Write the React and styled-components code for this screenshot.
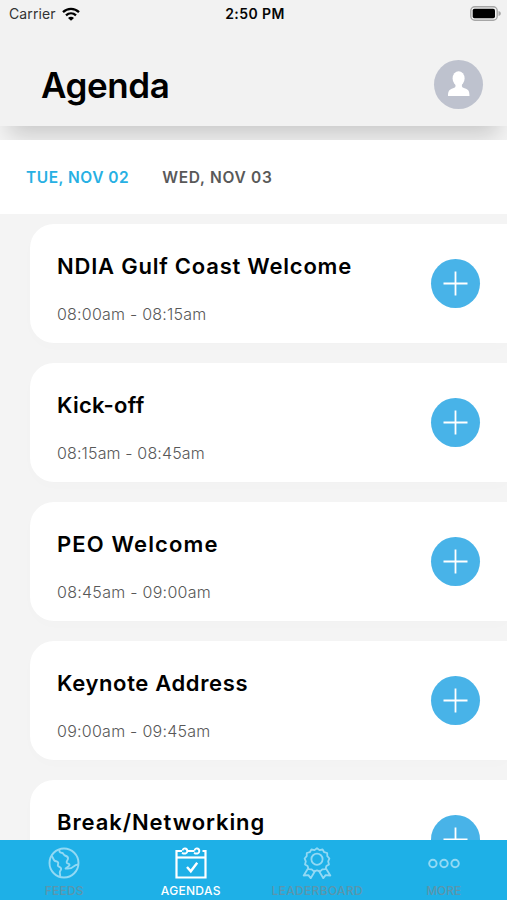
import styled, { createGlobalStyle } from "styled-components";

const GlobalStyle = createGlobalStyle`
    * {
        box-sizing: border-box;
    }
    body {
        margin: 0;
        font-family: Inter, "Liberation Sans", sans-serif;
        color: #050505;
        background-color: #f4f4f4;
    }
    h1, h2, p {
        margin: 0;
    }
    button {
        border: none;
        padding: 0;
        font-family: inherit;
        background: none;
    }
    svg {
        display: block;
    }
`

const Screen = styled.div`
    display: flex;
    flex-direction: column;
    height: 100vh;
    overflow: hidden;
`

const Header = styled.header`
    flex: none;
    height: 126px;
    background-color: #f2f2f2;
    box-shadow: 0 18px 22px -9px rgba(0, 0, 0, 0.18);
`

const StatusBar = styled.div`
    display: grid;
    grid-template-columns: 1fr auto 1fr;
    align-items: center;
    height: 27px;
    padding: 0 6px 0 9px;
    font-size: 14px;
`

const Carrier = styled.div`
    display: flex;
    align-items: center;
    gap: 6px;
    letter-spacing: 0.1px;
    color: #333;
`

const Clock = styled.span`
    font-weight: 600;
    letter-spacing: 0.4px;
`

const Battery = styled.div`
    justify-self: end;
`

const TitleRow = styled.div`
    display: flex;
    align-items: center;
    justify-content: space-between;
    height: 99px;
    padding: 16px 24px 0 41px;
`

const Title = styled.h1`
    font-size: 35px;
    line-height: 42px;
    font-weight: 600;
    letter-spacing: -0.4px;
    color: #000;
`

const Avatar = styled.div`
    width: 49px;
    height: 49px;
    margin-bottom: 1px;
    border-radius: 50%;
    background-color: #bec2ce;
`

const Days = styled.nav`
    position: relative;
    flex: none;
    display: flex;
    align-items: center;
    gap: 33px;
    height: 74px;
    margin-top: 14px;
    padding-left: 26px;
    background-color: white;
`

const Day = styled.button`
    font-size: 15.5px;
    font-weight: 600;
    letter-spacing: ${props => props.$tracking};
    color: ${props => props.$active ? "#27b0e3" : "#595959"};
`

const List = styled.main`
    flex: 1;
    min-height: 0;
    overflow: hidden;
    display: flex;
    flex-direction: column;
    gap: 20px;
    padding: 10px 0 0 30px;
`

const Card = styled.article`
    flex: none;
    display: flex;
    align-items: center;
    justify-content: space-between;
    height: 119px;
    padding: 0 27px;
    border-radius: 24px 0 0 24px;
    background-color: white;
    box-shadow: 0 4px 14px rgba(0, 0, 0, 0.01);
`

const Session = styled.div`
    align-self: flex-start;
    padding-top: 28px;
`

const SessionTitle = styled.h2`
    font-size: 22px;
    line-height: 28px;
    font-weight: 600;
    letter-spacing: ${props => props.$tracking};
    white-space: nowrap;
    color: #000;
`

const Time = styled.p`
    margin-top: 24px;
    font-size: 16px;
    line-height: 20px;
    font-weight: 300;
    letter-spacing: ${props => props.$tracking};
    white-space: nowrap;
    color: #585858;
`

const AddButton = styled.button`
    width: 49px;
    height: 49px;
    border-radius: 50%;
    background-color: #48b3e8;
`

const TabBar = styled.nav`
    flex: none;
    display: grid;
    grid-template-columns: repeat(4, 1fr);
    height: 60px;
    padding-left: 1px;
    background-color: #1eb0e7;
`

const Tab = styled.button`
    display: flex;
    flex-direction: column;
    align-items: center;
    padding-top: 7px;
    color: ${props => props.$active ? "white" : "#92d9f4"};
    span {
        margin-top: 4px;
        font-size: 12px;
        line-height: 15px;
        font-weight: 500;
        letter-spacing: ${props => props.$tracking};
        color: ${props => props.$active ? "white" : "#5b96ad"};
    }
`

const days = [
    { label: "TUE, NOV 02", tracking: "0.5px", active: true },
    { label: "WED, NOV 03", tracking: "0.7px" },
]

const sessions = [
    { title: "NDIA Gulf Coast Welcome", tracking: "0.78px", time: "08:00am - 08:15am", timeTracking: "0.22px" },
    { title: "Kick-off", tracking: "0.25px", time: "08:15am - 08:45am", timeTracking: "0.14px" },
    { title: "PEO Welcome", tracking: "1.15px", time: "08:45am - 09:00am", timeTracking: "0.28px" },
    { title: "Keynote Address", tracking: "0.63px", time: "09:00am - 09:45am", timeTracking: "0.26px" },
    { title: "Break/Networking", tracking: "0.92px" },
]

const WifiIcon = () => (
    <svg width="18" height="14" viewBox="0 0 18 14" fill="none" stroke="#000" strokeWidth="2.3">
        <path d="M1 5.1C5.5.8 12.5.8 17 5.1" />
        <path d="M4 8.3c2.9-2.7 7.1-2.7 10 0" />
        <path d="M9 13.8 6 10.9c1.7-1.5 4.3-1.5 6 0z" fill="#000" stroke="none" />
    </svg>
)

const BatteryIcon = () => (
    <svg width="31" height="15" viewBox="0 0 31 15">
        <rect x="0.8" y="0.8" width="26.4" height="13.4" rx="4" fill="#f2f2f2" stroke="#a6a6a6" strokeWidth="1.4" />
        <rect x="2.7" y="2.8" width="22.3" height="9.4" rx="1.8" fill="#000" />
        <path d="M28.5 5v5c1.8-.6 2.3-1.5 2.3-2.5s-.5-1.900-2.300-2.500z" fill="#a6a6a6" />
    </svg>
)

const PersonIcon = () => (
    <svg width="49" height="49" viewBox="0 0 49 49" fill="white">
        <ellipse cx="24.6" cy="18.6" rx="6" ry="7.4" />
        <path d="M21.5 23h6.400v3.200c.3 1.400 2.100 1.800 4.100 2.600 2.500 1 3.500 2.800 3.500 7.200H14c0-4.400 1.200-6.200 3.700-7.200 2-.8 3.600-1.200 3.800-2.600z" />
    </svg>
)

const PlusIcon = () => (
    <svg width="49" height="49" viewBox="0 0 49 49" stroke="white" strokeWidth="1.8">
        <path d="M24.5 12.500v24M12.500 24.500h24" />
    </svg>
)

const GlobeIcon = () => (
    <svg width="32" height="32" viewBox="0 0 32 32" fill="none" stroke="currentColor" strokeWidth="1.9" strokeLinejoin="round">
        <circle cx="16" cy="16" r="14.500" />
        <path d="M11.5 2.300c-.5 2 .2 3.200 2 3.500 2.500.3 1.500 2 3.300 2.700 1.800.6 3.700 1.200 3.200 3.400-.4 1.600-2 2.500-1.200 3.900.8 1.300 2.600.4 2.800 2.200-.6 1.400-2.600 2.200-4 3.500 3.500.5 6.500-.2 8.500-2.300 1.400-1.400 2.600-1.500 4.200-1.700" />
        <path d="M3.300 9c1.800.4 1.500 3.400 3.200 4.600 1.300.9 2.900.3 3.600 1.800.6 1.400-.8 2.300-.1 3.500.7 1 2.700 1 3.100 2.500.4 1.700-1.300 2.400-1.300 4 0 1.300.7 2 .2 4.200" />
    </svg>
)

const CalendarIcon = () => (
    <svg width="32" height="32" viewBox="0 0 32 32" fill="none" stroke="currentColor" strokeWidth="2.2">
        <path d="M7 4H1.500v26.500h29V4h-3M12.500 4h7" />
        <path d="M1.500 10.500h29" />
        <path d="M7 5.800c3 1.700 5.300.3 5.300-1.900 0-3-4.600-3.400-4.600-.4M19 5.800c3 1.700 5.300.3 5.300-1.900 0-3-4.600-3.400-4.600-.4" strokeWidth="1.9" />
        <path d="m12 20 3.800 4.300 6.400-8.500" strokeWidth="2.4" />
    </svg>
)

const BadgeIcon = () => (
    <svg width="32" height="32" viewBox="0 0 32 32" fill="none" stroke="currentColor" strokeWidth="1.8" strokeLinejoin="round">
        <path d="m16 1.200 2.500 1.900 3.100-.6 1.600 2.700 3 .8.100 3.200 2.100 2.300-1.200 2.900.8 3-2.600 1.700-.9 3-3.200.2-2.200 2.100-3.100-1-3.100 1-2.200-2.100-3.200-.2-.9-3L4 17.400l.8-3-1.200-2.900 2.100-2.300.1-3.200 3-.8 1.600-2.700 3.100.6z" />
        <circle cx="16" cy="12.2" r="5.600" />
        <path d="m7 21.500-4.300 7 4.700-.4 2.300 3.100 4.800-8M25 21.500l4.300 7-4.700-.4-2.300 3.100-4.800-8" />
    </svg>
)

const MoreIcon = () => (
    <svg width="32" height="32" viewBox="0 0 32 32" fill="none" stroke="currentColor" strokeWidth="2">
        <circle cx="4.900" cy="16.500" r="3.700" />
        <circle cx="16" cy="16.500" r="3.700" />
        <circle cx="27.100" cy="16.500" r="3.700" />
    </svg>
)

const tabs = [
    { label: "FEEDS", icon: GlobeIcon, tracking: "0.2px" },
    { label: "AGENDAS", icon: CalendarIcon, tracking: "0.3px", active: true },
    { label: "LEADERBOARD", icon: BadgeIcon, tracking: "0.35px" },
    { label: "MORE", icon: MoreIcon, tracking: "0px" },
]

const App = () => {
    return (
        <Screen>
            <GlobalStyle />
            <Header>
                <StatusBar>
                    <Carrier>
                        <span>Carrier</span>
                        <WifiIcon />
                    </Carrier>
                    <Clock>2:50 PM</Clock>
                    <Battery>
                        <BatteryIcon />
                    </Battery>
                </StatusBar>
                <TitleRow>
                    <Title>Agenda</Title>
                    <Avatar>
                        <PersonIcon />
                    </Avatar>
                </TitleRow>
            </Header>
            <Days>
                {days.map(day => (
                    <Day key={day.label} $active={day.active} $tracking={day.tracking}>{day.label}</Day>
                ))}
            </Days>
            <List>
                {sessions.map(session => (
                    <Card key={session.title}>
                        <Session>
                            <SessionTitle $tracking={session.tracking}>{session.title}</SessionTitle>
                            {session.time && <Time $tracking={session.timeTracking}>{session.time}</Time>}
                        </Session>
                        <AddButton aria-label="Add">
                            <PlusIcon />
                        </AddButton>
                    </Card>
                ))}
            </List>
            <TabBar>
                {tabs.map(({ label, icon: Icon, active, tracking }) => (
                    <Tab key={label} $active={active} $tracking={tracking}>
                        <Icon />
                        <span>{label}</span>
                    </Tab>
                ))}
            </TabBar>
        </Screen>
    )
}
export default App;
